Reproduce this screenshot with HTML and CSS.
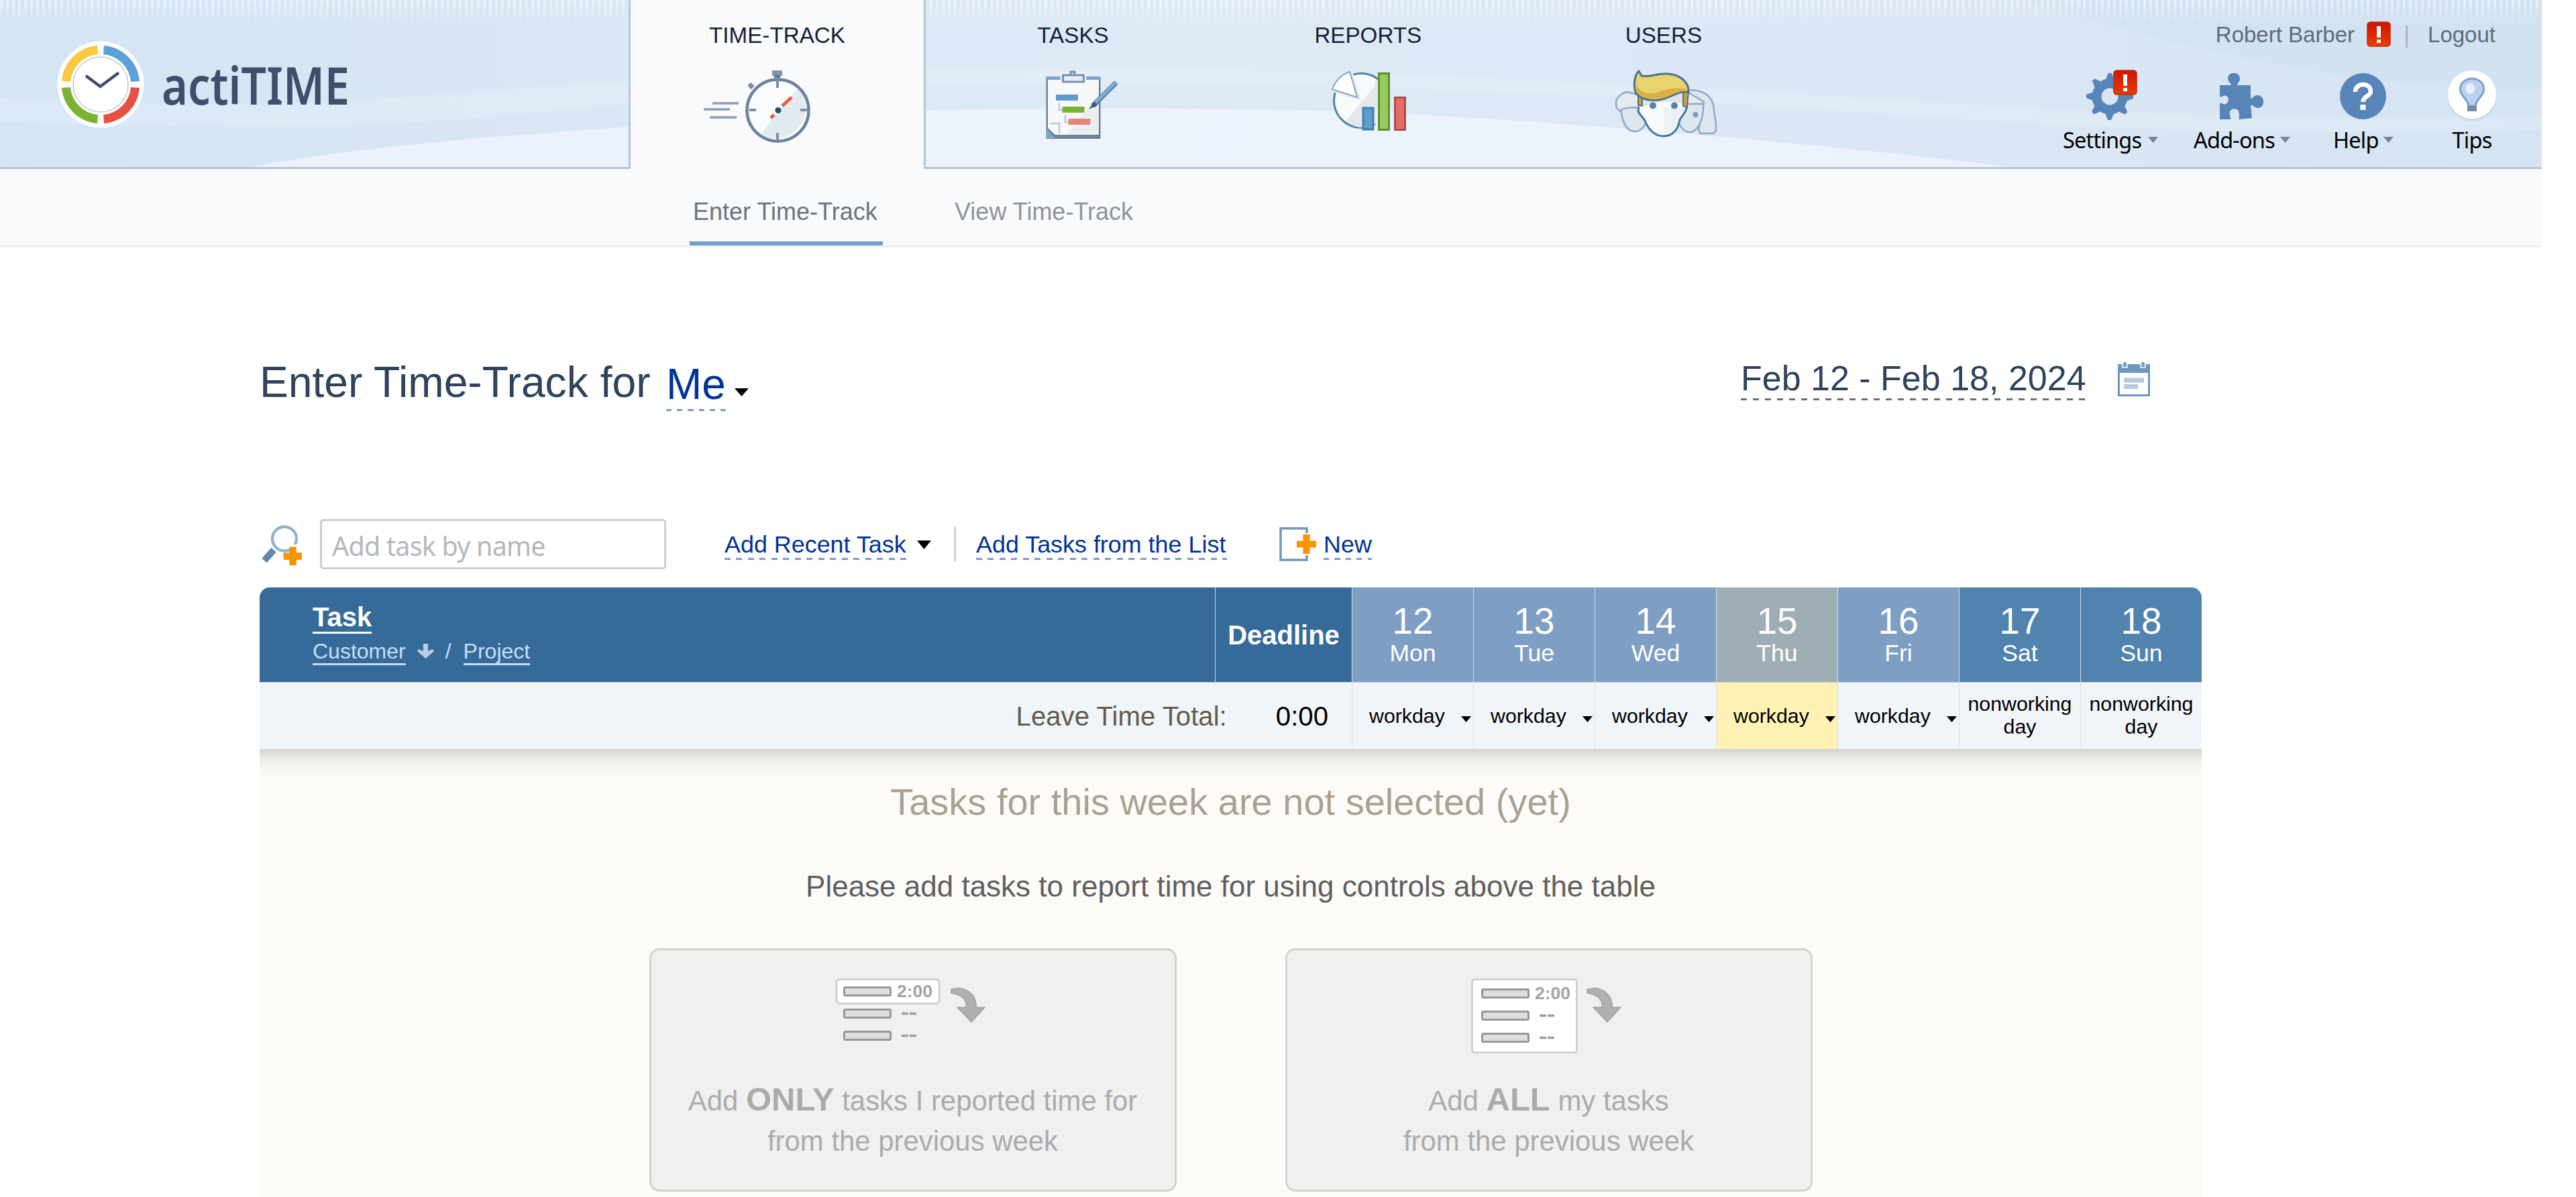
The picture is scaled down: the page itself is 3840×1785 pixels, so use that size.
FILE: index.html
```html
<!DOCTYPE html>
<html lang="en">
<head>
<meta charset="utf-8">
<title>actiTIME - Enter Time-Track</title>
<link rel="stylesheet" href="styles.css">
</head>
<body>
<div class="page">
  <header class="header">
    <svg class="header-bg" viewBox="0 0 3789 252" preserveAspectRatio="none" aria-hidden="true">
      <defs>
        <linearGradient id="sky" x1="0" x2="1" y1="0" y2="0">
          <stop offset="0" stop-color="#d5e5f4"/>
          <stop offset=".25" stop-color="#dae7f4"/>
          <stop offset=".48" stop-color="#deebf7"/>
          <stop offset=".75" stop-color="#dbe7f4"/>
          <stop offset="1" stop-color="#d5e4f3"/>
        </linearGradient>
        <linearGradient id="fade" x1="0" x2="0" y1="0" y2="1">
          <stop offset="0" stop-color="#fff" stop-opacity=".5"/>
          <stop offset="1" stop-color="#fff" stop-opacity="0"/>
        </linearGradient>
        <pattern id="bars" width="9" height="36" patternUnits="userSpaceOnUse">
          <rect width="4" height="34" fill="url(#fade)"/>
        </pattern>
      </defs>
      <rect width="3789" height="252" fill="url(#sky)"/>
      <path d="M0 146C150 152 300 160 500 151C700 142 900 112 1379 105C1800 98 2200 110 2840 150C3100 166 3400 182 3789 172V194C3400 204 3100 190 2840 172C2200 128 1900 120 1379 127C1000 132 750 190 400 189C200 189 100 184 0 182Z" fill="#fff" fill-opacity=".17"/>
      <path d="M374 249C560 215 760 202 939 189C1150 170 1350 162 1600 162C1800 161 2000 163 2200 176C2450 192 2750 218 2995 249Z" fill="#f0f5fc" fill-opacity=".8"/>
      <path d="M3010 0C3200 50 3330 95 3560 120C3640 130 3720 135 3789 138V0Z" fill="#c6dcec" fill-opacity=".22"/>
      <rect width="3789" height="36" fill="url(#bars)"/>
    </svg>
    <div class="brand">
      <svg width="560" height="249" viewBox="0 0 560 249" role="img" aria-label="actiTIME">
        <circle cx="150" cy="126" r="64.500" fill="#fff"/>
        <g fill="none" stroke-width="13">
          <path d="M145.500 74.500A51.500 51.500 0 0 0 98.500 121.500" stroke="#fbc840"/>
          <path d="M154.500 74.500A51.500 51.500 0 0 1 201.500 121.500" stroke="#5b9fdb"/>
          <path d="M201.500 130.500A51.500 51.500 0 0 1 154.500 177.500" stroke="#e75145"/>
          <path d="M98.500 130.500A51.500 51.500 0 0 0 145.500 177.500" stroke="#7ab234"/>
        </g>
        <circle cx="150" cy="126" r="41" fill="#fff" stroke="#c3c7d2" stroke-width="1.500"/>
        <path d="M128 113L149.500 129L177 108.500" fill="none" stroke="#414e6b" stroke-width="4.500"/>
        <text class="logo-text" x="241" y="155.500" textLength="280" lengthAdjust="spacingAndGlyphs">actiTIME</text>
      </svg>
    </div>
    <nav class="tabs">
      <a class="tab tab-active">TIME-TRACK
        <svg width="437" height="120" viewBox="940 100 437 120">
          <path d="M1062 154H1101M1049 163H1088M1058 175H1098" stroke="#8c9db8" stroke-width="3.500"/>
          <rect x="1151" y="105" width="15" height="8" fill="#8192ab"/>
          <rect x="1154" y="112" width="9" height="4" fill="#64748f"/>
          <path d="M1117 125L1122 131" stroke="#7f8ba2" stroke-width="7"/>
          <circle cx="1159.500" cy="164.500" r="46" fill="#f9fbfc"/>
          <path d="M1190 131A46 46 0 0 1 1133 201Z" fill="#e1eaee"/>
          <circle cx="1159.500" cy="164.500" r="46" fill="none" stroke="#6e829d" stroke-width="4.500"/>
          <path d="M1159 121V131M1159 198V208M1117 164H1127M1193 164H1203" stroke="#7890a6" stroke-width="4"/>
          <path d="M1180 145L1166 158M1154 171L1149 176" stroke="#e65a50" stroke-width="5"/>
          <circle cx="1160" cy="164.500" r="4.500" fill="#2d4b5b"/>
        </svg>
      </a>
      <a class="tab">TASKS
        <svg width="439" height="120" viewBox="1380 100 439 120">
          <rect x="1559.500" y="114" width="81" height="93" fill="#6e8197"/>
          <rect x="1559.500" y="114" width="81" height="5" fill="#7ba6cb"/>
          <path d="M1562 119H1638V201H1573L1562 191Z" fill="#f6f8f9"/>
          <path d="M1638 140V201H1590Z" fill="#eaf0f2"/>
          <path d="M1560 192L1573 206H1560Z" fill="#7ba6cb"/>
          <rect x="1581" y="108" width="38" height="14" fill="#f2f6fa"/>
          <path d="M1596 112V107H1602V112" fill="none" stroke="#7b90a7" stroke-width="3"/>
          <rect x="1584.500" y="112" width="31" height="10" fill="#e6edf4" stroke="#7b90a7" stroke-width="3"/>
          <path d="M1579 153V164H1584M1588 171V182H1593M1565 184H1579V198" fill="none" stroke="#bdc8d2" stroke-width="2.500"/>
          <rect x="1574" y="141" width="33" height="9" fill="#5c9bcb"/>
          <rect x="1583.500" y="159" width="33" height="9" fill="#7ab234"/>
          <rect x="1592.500" y="177" width="33" height="9" fill="#e5837c"/>
          <path d="M1664 123L1629 158" stroke="#5f89b0" stroke-width="7.500"/>
          <path d="M1664 122L1630 156" stroke="#86b0d3" stroke-width="3.500"/>
          <path d="M1631 151L1636 157L1623 163Z" fill="#435a70"/>
        </svg>
      </a>
      <a class="tab">REPORTS
        <svg width="440" height="120" viewBox="1819 100 440 120">
          <circle cx="2029" cy="150" r="40.500" fill="#f8fafb" stroke="#4f83a8" stroke-width="3"/>
          <path d="M2056 120A39 39 0 1 1 2006 181Z" fill="#e1e9ed"/>
          <path d="M2012 105L2024 145L1985 133Q1992 113 2012 105Z" fill="#fff" stroke="#dfeaf4" stroke-width="7"/>
          <path d="M2012 107L2023 145L1986 133Q1993 114 2012 107Z" fill="#fff" stroke="#8fabc9" stroke-width="2.200"/>
          <rect x="2050" y="121" width="24" height="60" fill="#dfeaf6"/>
          <rect x="2051" y="163" width="24" height="32" fill="#edf3fb"/>
          <rect x="2032" y="161" width="15" height="32" fill="#5f9dcc" stroke="#437fae" stroke-width="3"/>
          <rect x="2055.500" y="109.500" width="15" height="84" fill="#97cb60" stroke="#5d9130" stroke-width="3"/>
          <rect x="2079.500" y="145.500" width="15" height="48" fill="#e66d65" stroke="#aa4d4b" stroke-width="3"/>
        </svg>
      </a>
      <a class="tab">USERS
        <svg width="440" height="120" viewBox="2260 100 440 120">
          <g fill="#dfe7ee" stroke="#8fa9c8" stroke-width="2.500" stroke-linejoin="round">
            <path d="M2416 162C2418 180 2424 196 2437 196C2446 196 2452 189 2454 180V160H2420Z"/>
            <path d="M2442 141L2425 137C2414 140 2408 148 2409 156C2409 160 2411 163 2415 166C2418 162 2424 160 2446 160Z" fill="#e3ebee"/>
            <path d="M2512 135C2530 132 2549 138 2554 156C2555 172 2559 180 2558 195L2554 199H2535L2532 194L2540 152Z"/>
            <path d="M2503 155H2539C2540 172 2534 196 2519 197C2511 197 2505 190 2503 183Z"/>
          </g>
          <circle cx="2527.500" cy="171" r="4" fill="#7d9bc4"/>
          <path d="M2444 145H2513V162L2508 172C2505 188 2495 203 2480 203C2466 203 2453 188 2450 175L2443 163Z" fill="#f6fafc"/>
          <path d="M2480 160H2515L2508 172C2505 188 2495 203 2480 203Z" fill="#ebf1f4"/>
          <path d="M2446 148L2511 139V155Q2475 146 2448 160Z" fill="#dbe3e8"/>
          <path d="M2443 159L2442 166C2444 172 2450 175 2452 180C2457 192 2466 203 2480 203C2495 203 2502 191 2504 179C2506 173 2513 170 2515 158" fill="none" stroke="#44799d" stroke-width="3"/>
          <path d="M2442 142V157L2448 158V147ZM2509 138V158L2515 160L2517 136Z" fill="#bf9f49" stroke="#476a78" stroke-width="1.800"/>
          <path d="M2443 106L2447 113C2462 116 2468 109 2485 110C2504 111 2518 122 2517 137C2500 135 2490 147 2473 149C2455 151 2444 146 2438 138C2435 128 2436 112 2443 106Z" fill="#e8d36f" stroke="#49748a" stroke-width="3"/>
          <path d="M2438 124C2444 138 2455 142 2470 138C2485 132 2500 130 2514 133V136C2498 135 2489 146 2473 147C2455 149 2446 145 2440 138Z" fill="#dcb046"/>
          <circle cx="2464" cy="157.500" r="5" fill="#5b7fae"/>
          <circle cx="2496" cy="157.500" r="5" fill="#5b7fae"/>
        </svg>
      </a>
    </nav>
    <div class="tools">
      <div class="account">
        <span class="account-name">Robert Barber</span>
        <svg class="account-alert" width="36" height="40" viewBox="0 0 36 40"><use href="#alert"/></svg>
        <span class="account-sep"></span>
        <span>Logout</span>
      </div>
      <div class="tool-row">
        <a class="tool">
          <svg width="142" height="88" viewBox="3074 100 142 88">
            <defs>
              <linearGradient id="red" x1="0" x2="0" y1="0" y2="1"><stop offset="0" stop-color="#d21300"/><stop offset="1" stop-color="#e93c00"/></linearGradient>
              <g id="alert">
                <rect x="1" y="2" width="34" height="36" rx="4.500" fill="url(#red)" stroke="#bd2a10" stroke-width="1.500"/>
                <path d="M18 8V25M18 28V33" stroke="#fff" stroke-width="6"/>
              </g>
              <path id="tooth" d="M3136 123L3142 109H3147L3152 123Z"/>
            </defs>
            <g fill="#5885b8">
              <use href="#tooth"/>
              <use href="#tooth" transform="rotate(45 3144 144)"/>
              <use href="#tooth" transform="rotate(90 3144 144)"/>
              <use href="#tooth" transform="rotate(135 3144 144)"/>
              <use href="#tooth" transform="rotate(180 3144 144)"/>
              <use href="#tooth" transform="rotate(225 3144 144)"/>
              <use href="#tooth" transform="rotate(270 3144 144)"/>
              <use href="#tooth" transform="rotate(315 3144 144)"/>
            </g>
            <circle cx="3144" cy="144" r="19.500" fill="none" stroke="#5885b8" stroke-width="14"/>
            <use href="#alert" transform="translate(3149 103)"/>
          </svg>
          <span class="tool-label"><span>Settings</span><i class="caret-sm"></i></span>
        </a>
        <a class="tool">
          <svg width="144" height="88" viewBox="3269 100 144 88">
            <path fill="#5885b8" d="M3308 127H3325C3325 124 3320 122 3320 117C3320 106 3338 106 3338 117C3338 122 3334 124 3334 127H3354V147C3357 147 3359 142 3364 142C3376 142 3376 161 3365 161C3359 161 3357 156 3354 157L3356 176L3337 178C3336 175 3338 173 3336 166C3334 161 3325 161 3323 167C3322 172 3325 174 3324 178H3308V154C3311 153 3313 157 3317 155C3322 152 3322 145 3318 143C3313 141 3311 146 3308 144Z"/>
          </svg>
          <span class="tool-label"><span>Add-ons</span><i class="caret-sm"></i></span>
        </a>
        <a class="tool">
          <svg width="90" height="88" viewBox="3477 100 90 88">
            <circle cx="3521.500" cy="143.500" r="34.500" fill="#5885b8"/>
            <path d="M3510 137C3510 122 3533 123 3533 136C3533 144 3521.500 143 3521.500 152" fill="none" stroke="#fff" stroke-width="6.500"/>
            <rect x="3517.500" y="156" width="8" height="8" fill="#fff"/>
          </svg>
          <span class="tool-label"><span>Help</span><i class="caret-sm"></i></span>
        </a>
        <a class="tool tool-tips">
          <svg width="90" height="88" viewBox="3639.500 100 90 88">
            <circle cx="3684.500" cy="144" r="36.500" fill="#8aa0b8" fill-opacity=".18"/>
            <circle cx="3684.500" cy="141" r="36" fill="#fff"/>
            <path d="M3679 158C3679 147 3667 145 3667 133C3667 112 3702 112 3702 133C3702 145 3690 147 3690 158Z" fill="#b9d2f0" stroke="#7f9fc8" stroke-width="3"/>
            <ellipse cx="3682" cy="132" rx="7" ry="8" fill="#e6f0fb"/>
            <rect x="3677.500" y="158" width="14" height="8" fill="#7a8a9e"/>
          </svg>
          <span class="tool-label">Tips</span>
        </a>
      </div>
    </div>
  </header>

  <div class="subnav">
    <a class="sub sub-active">Enter Time-Track</a>
    <a class="sub">View Time-Track</a>
  </div>

  <main class="main">
    <div class="title-row">
      <h1 class="title">Enter Time-Track for</h1>
      <a class="who dashed">Me</a>
      <svg class="who-arrow" width="21" height="12" viewBox="0 0 21 12"><path d="M0 0H21L10.500 12Z"/></svg>
      <a class="range dashed">Feb 12 - Feb 18, 2024</a>
      <svg class="calendar" width="48" height="52" viewBox="0 0 48 52">
        <path d="M0 3H48V51H0Z" fill="#6f97bd"/>
        <rect x="3" y="16" width="42" height="32" fill="#fff"/>
        <path d="M6 2H15V9H6ZM33 2H42V9H33Z" fill="#d6e2ee"/>
        <path d="M10.500 0V7M37.500 0V7" stroke="#6f97bd" stroke-width="4"/>
        <path d="M9 27H39M9 36.500H30" stroke="#b8cbdc" stroke-width="7"/>
      </svg>
    </div>

    <div class="toolbar">
      <svg width="70" height="75" viewBox="387 774 70 75">
        <path d="M408 820L394 836" stroke="#6389ab" stroke-width="10"/>
        <circle cx="424" cy="803.500" r="18" fill="#fdfeff" stroke="#94b3ca" stroke-width="4.500"/>
        <path d="M420 826H450V845H420ZM432 812H442V845H432Z" fill="#fff"/>
        <path d="M436.500 815.500V843M422.500 829.500H450" stroke="#f79400" stroke-width="10.500"/>
      </svg>
      <div class="search">Add task by name</div>
      <a class="link link-recent dashed">Add Recent Task</a>
      <svg class="link-arrow" width="21" height="13" viewBox="0 0 21 13"><path d="M0 0H21L10.500 13Z"/></svg>
      <span class="toolbar-sep"></span>
      <a class="link link-list dashed">Add Tasks from the List</a>
      <svg class="new-icon" width="56" height="51" viewBox="1907 786 56 51">
        <path d="M1948 795V788H1909V835H1948V828" fill="none" stroke="#6f97bd" stroke-width="3.500"/>
        <path d="M1947.500 797V826M1933 811.500H1962" stroke="#f79400" stroke-width="10"/>
      </svg>
      <a class="link link-new dashed">New</a>
    </div>

    <section class="sheet">
      <div class="grid head">
        <div class="cell task">
          <a class="task-name">Task</a>
          <div class="task-sub">
            <a class="sort">Customer</a>
            <svg class="sort-arrow" width="25" height="22" viewBox="0 0 25 22"><path d="M9 0H16V11L23 8L25 11L12.500 22L0 11L2 8L9 11Z" fill="#b9cfe4"/></svg>
            <span class="slash">/</span>
            <a class="sort">Project</a>
          </div>
        </div>
        <div class="cell deadline">Deadline</div>
        <div class="cell day"><b>12</b><span>Mon</span></div>
        <div class="cell day"><b>13</b><span>Tue</span></div>
        <div class="cell day"><b>14</b><span>Wed</span></div>
        <div class="cell day today"><b>15</b><span>Thu</span></div>
        <div class="cell day"><b>16</b><span>Fri</span></div>
        <div class="cell day weekend"><b>17</b><span>Sat</span></div>
        <div class="cell day weekend"><b>18</b><span>Sun</span></div>
      </div>
      <div class="grid leave">
        <div class="leave-total"><span class="leave-label">Leave Time Total:</span><span>0:00</span></div>
        <div class="cell kind">workday<i class="caret"></i></div>
        <div class="cell kind">workday<i class="caret"></i></div>
        <div class="cell kind">workday<i class="caret"></i></div>
        <div class="cell kind kind-today">workday<i class="caret"></i></div>
        <div class="cell kind">workday<i class="caret"></i></div>
        <div class="cell kind kind-off">nonworking<br>day</div>
        <div class="cell kind kind-off">nonworking<br>day</div>
      </div>
      <div class="empty">
        <h2 class="empty-title">Tasks for this week are not selected (yet)</h2>
        <p class="empty-text">Please add tasks to report time for using controls above the table</p>
        <div class="cards">
          <div class="card">
            <svg width="300" height="130" viewBox="1211 1447 300 130">
              <defs>
                <g id="bar"><rect x="1.500" y="1.500" width="69" height="12" rx="1.500" fill="#dedede" stroke="#989898" stroke-width="3"/></g>
                <path id="arrow" d="M0 2Q22 -4 34 14Q38 23 37 29H50L30 51L9 29H22Q24 12 0 8Z" fill="#b0b0b0" stroke="#989898" stroke-width="1.200"/>
              </defs>
              <rect x="1247" y="1460.500" width="153" height="36" rx="4" fill="#fff" stroke="#cbcbcb" stroke-width="2.500"/>
              <use href="#bar" x="1257" y="1471"/>
              <use href="#bar" x="1257" y="1504"/>
              <use href="#bar" x="1257" y="1537"/>
              <text class="mini" x="1337" y="1487" textLength="53" lengthAdjust="spacingAndGlyphs">2:00</text>
              <path d="M1344 1511.500H1354M1356 1511.500H1366M1344 1544.500H1354M1356 1544.500H1366" stroke="#9c9c9c" stroke-width="3.500"/>
              <use href="#arrow" x="1418" y="1473"/>
            </svg>
            <p class="card-text">Add <strong>ONLY</strong> tasks I reported time for<br>from the previous week</p>
          </div>
          <div class="card">
            <svg width="300" height="130" viewBox="2159 1447 300 130">
              <rect x="2194.500" y="1460.500" width="156" height="109" rx="4" fill="#fff" stroke="#cbcbcb" stroke-width="2.500"/>
              <use href="#bar" x="2208" y="1474"/>
              <use href="#bar" x="2208" y="1507"/>
              <use href="#bar" x="2208" y="1540"/>
              <text class="mini" x="2288" y="1490" textLength="53" lengthAdjust="spacingAndGlyphs">2:00</text>
              <path d="M2295 1514.500H2305M2307 1514.500H2317M2295 1547.500H2305M2307 1547.500H2317" stroke="#9c9c9c" stroke-width="3.500"/>
              <use href="#arrow" x="2366" y="1473"/>
            </svg>
            <p class="card-text">Add <strong>ALL</strong> my tasks<br>from the previous week</p>
          </div>
        </div>
      </div>
    </section>
  </main>
</div>
</body>
</html>
```
FILE: styles.css
```css
* { box-sizing: border-box; }
html, body { margin: 0; background: #fff; }
body {
  height: 1785px;
  overflow: hidden;
  font-family: "Liberation Sans", Arial, sans-serif;
  color: #000;
}
svg { display: block; flex: none; }
h1, h2, p { margin: 0; font-weight: normal; }
.page { width: 3789px; }

/* Header */
.header { position: relative; isolation: isolate; display: flex; height: 252px; }
.header-bg { position: absolute; inset: 0; width: 3789px; height: 252px; z-index: -1; }
.brand {
  width: 940px;
  border-bottom: 3px solid #b7c5d1;
  border-right: 3px solid #b7c5d1;
  border-bottom-right-radius: 3px;
}
.logo-text { font: 600 78px "Noto Sans", sans-serif; fill: #414e6b; }
.tabs { display: flex; }
.tab {
  width: 440.600px;
  padding-top: 33px;
  border-bottom: 3px solid #b7c5d1;
  text-align: center;
  font-size: 33.200px;
  line-height: 40px;
  color: #172136;
  white-space: nowrap;
}
.tab svg { margin: 27px auto 0; }
.tab-active { width: 437px; background: #f9fafc; border-bottom: 0; }
.tab-active + .tab { width: 442px; border-left: 3px solid #b7c5d1; border-bottom-left-radius: 3px; }
.tools {
  flex: 1;
  padding: 32px 59px 0 0;
  border-bottom: 3px solid #b7c5d1;
  display: flex;
  flex-direction: column;
  align-items: flex-end;
}
.account {
  display: flex;
  height: 40px;
  padding-right: 10px;
  font-size: 33px;
  line-height: 40px;
  color: #5d6d7a;
  white-space: nowrap;
}
.account-alert { margin: -1px 0 0 18px; }
.account-sep { width: 3px; height: 33px; margin: 6px 30px 0 22px; background: #b0b3b5; }
.tool-row { display: flex; margin-top: 28px; }
.tool { display: flex; flex-direction: column; margin-right: 53px; }
.tool:nth-child(2) { margin-right: 64px; }
.tool:nth-child(3) { margin-right: 72px; }
.tool-tips { align-items: center; margin-right: 0; }
.tool-label {
  display: flex;
  justify-content: space-between;
  font-family: "Noto Sans", sans-serif;
  font-size: 32.500px;
  letter-spacing: -.8px;
  line-height: 42px;
}
.caret-sm {
  width: 15px;
  height: 9px;
  margin-top: 16px;
  background: #7c858e;
  clip-path: polygon(0 0, 100% 0, 50% 100%);
}

/* Sub navigation */
.subnav {
  display: flex;
  gap: 100px;
  height: 117px;
  padding-left: 1028px;
  background: #f9fafc;
  border-bottom: 3px solid #eeeff1;
  font-size: 36px;
  line-height: 40px;
  color: #8e949b;
}
.sub { height: 114px; padding: 44px 7px 24px; }
.sub-active { width: 288px; padding: 44px 0 24px 5px; border-bottom: 6px solid #739ccb; color: #6b747d; white-space: nowrap; }

/* Title row */
.main { padding: 164px 0 0 387px; }
.dashed {
  --dash: 8.750px;
  --ink: #7f97cc;
  padding-bottom: 3px;
  background: repeating-linear-gradient(90deg, var(--ink) 0 var(--dash), transparent var(--dash) calc(var(--dash) * 2)) left bottom / 100% 3px no-repeat;
  white-space: nowrap;
}
.title-row { display: flex; align-items: flex-start; width: 2895px; height: 241px; }
.title { width: 606px; font-size: 64.200px; line-height: 74px; color: #2f435a; white-space: nowrap; }
.who { --dash: 8.100px; margin-top: 4px; font-size: 64px; line-height: 73px; color: #039; }
.who-arrow { margin: 46px 0 0 13px; }
.range {
  --dash: 9px;
  --ink: #66717f;
  width: 515px;
  margin: 1px 47px 0 auto;
  font-size: 52px;
  line-height: 60px;
  color: #2f435a;
}
.calendar { margin: 7px 77px 0 0; }

/* Toolbar */
.toolbar { display: flex; align-items: flex-start; height: 102px; }
.search {
  width: 516px;
  height: 75px;
  margin-left: 20px;
  padding-left: 15px;
  border: 3px solid #c9d0d6;
  border-radius: 5px;
  font-family: "Noto Sans", sans-serif;
  font-size: 39.500px;
  letter-spacing: -.8px;
  line-height: 75px;
  color: #b3b8bc;
}
.link { margin-top: 18px; font-size: 35.900px; line-height: 40px; color: #039; }
.link-recent { width: 272px; margin-left: 87px; }
.link-arrow { margin: 32px 34px 0 15px; }
.toolbar-sep { width: 3px; height: 51px; margin: 12px 30px 0 0; background: #c9d0d6; }
.link-list { width: 374px; }
.new-icon { margin: 12px 10px 0 78px; }
.link-new { --dash: 8.200px; width: 72px; }

/* Time sheet */
.sheet { width: 2895px; }
.grid { display: grid; grid-template-columns: 1424px 204px repeat(7, 181px); }
.head {
  height: 142px;
  border-bottom: 1px solid #d9dadb;
  border-radius: 15px 15px 0 0;
  overflow: hidden;
  color: #fff;
}
.cell { border-left: 1px solid #cfdae3; }
.task { padding: 22px 0 0 79px; border-left: 0; background: #366a99; }
.task-name {
  display: block;
  width: 88px;
  border-bottom: 3px solid #fff;
  font-size: 40px;
  font-weight: bold;
  line-height: 44px;
}
.task-sub {
  display: flex;
  margin-top: 9px;
  font-size: 32px;
  line-height: 34px;
  color: #c6dff8;
}
.sort { padding-bottom: 1px; border-bottom: 3px solid #c6dff8; }
.sort-arrow { margin: 6px 17px 0 17px; }
.slash { margin-right: 18px; }
.deadline {
  background: #366a99;
  text-align: center;
  font-size: 40px;
  font-weight: bold;
  line-height: 143px;
}
.day {
  display: flex;
  flex-direction: column;
  align-items: center;
  padding-top: 22px;
  background: #7e9ec4;
}
.day b { font-weight: normal; font-size: 55px; line-height: 56px; }
.day span { font-size: 35.600px; line-height: 40px; }
.today { background: #9faeb4; }
.weekend { background: #5183af; }
.leave { height: 100px; border-bottom: 1px solid #d8d9d8; background: #f0f5fa; }
.leave-total {
  grid-column: span 2;
  display: flex;
  justify-content: flex-end;
  align-items: center;
  padding: 2px 35px 0 0;
  font-size: 40.200px;
}
.leave-label { margin-right: 73px; color: #665a48; }
.kind {
  display: flex;
  align-items: center;
  padding-left: 25px;
  border-left-color: #dcdfe2;
  font-size: 30.300px;
  line-height: 34px;
}
.caret {
  width: 15px;
  height: 9px;
  margin: 10px 3px 0 auto;
  background: #000;
  clip-path: polygon(0 0, 100% 0, 50% 100%);
}
.kind-today { background: #fff2b5; }
.kind-off { display: block; padding: 15px 0 0; text-align: center; background: #f1f4f9; }

/* Empty state */
.empty {
  height: 667px;
  padding-top: 43px;
  text-align: center;
  background: linear-gradient(#d3d3cf 0, #e8e7e3 10px, #f5f4f0 22px, #fcfbf7 42px);
}
.empty-title { font-size: 56px; line-height: 70px; color: #aaa094; }
.empty-text { margin-top: 61px; font-size: 44px; line-height: 60px; color: #5f5f5f; }
.cards { display: flex; justify-content: center; gap: 162px; margin-top: 62px; }
.card {
  width: 786px;
  height: 363px;
  padding-top: 30px;
  border: 3px solid #d3d3cd;
  border-radius: 15px;
  background: #f0f0f0;
}
.card svg { margin: 0 auto; }
.card-text { margin-top: 35px; font-size: 41.900px; line-height: 60px; color: #ababab; }
.card-text strong { font-size: 49px; line-height: 0; }
.mini { font: bold 26px "Liberation Sans", sans-serif; fill: #a3a3a3; }
```
